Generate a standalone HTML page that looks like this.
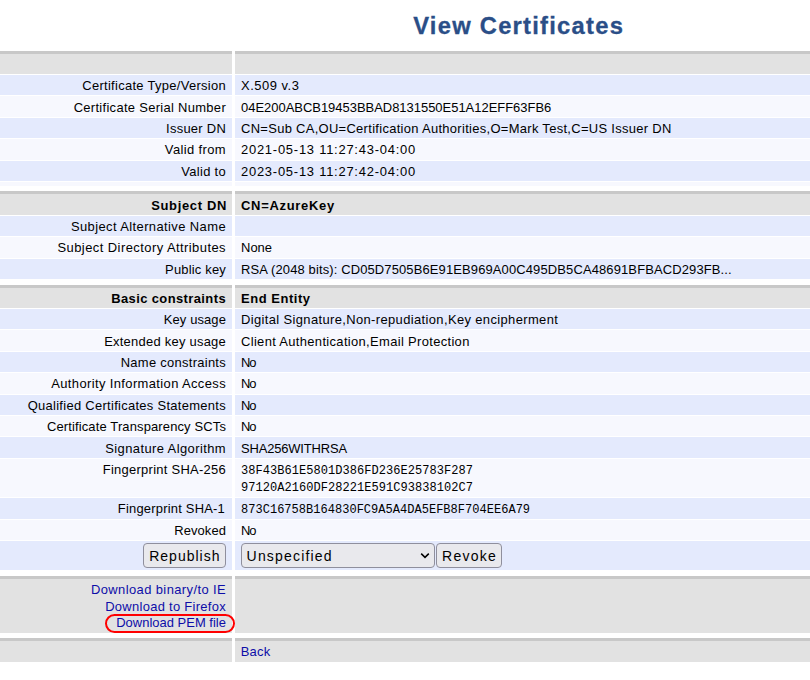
<!DOCTYPE html>
<html><head><meta charset="utf-8"><style>
html,body{margin:0;padding:0;background:#fff;width:810px;height:680px;overflow:hidden;position:relative}
body>div,body>svg{position:absolute}
.t{white-space:pre}
</style></head><body>
<div class="t" style="top:15px;font-family:'Liberation Sans', sans-serif;font-size:23.76px;line-height:22px;color:#2a4e87;-webkit-text-stroke:0.3px #2a4e87;font-weight:bold;letter-spacing:1.250px;left:413.20px;">View Certificates</div>
<div style="left:0px;top:51px;width:232px;height:3px;background:#c8c8c8;"></div>
<div style="left:235px;top:51px;width:575px;height:3px;background:#c8c8c8;"></div>
<div style="left:0px;top:54px;width:232px;height:20px;background:#e2e2e2;"></div>
<div style="left:235px;top:54px;width:575px;height:20px;background:#e2e2e2;"></div>
<div style="left:0px;top:75px;width:232px;height:20px;background:#e4eafd;"></div>
<div style="left:235px;top:75px;width:575px;height:20px;background:#e4eafd;"></div>
<div class="t" style="top:80px;font-family:'Liberation Sans', sans-serif;font-size:12.96px;line-height:12px;color:#000;letter-spacing:0.299px;right:584.00px;">Certificate Type/Version</div>
<div class="t" style="top:80px;font-family:'Liberation Sans', sans-serif;font-size:12.96px;line-height:12px;color:#000;letter-spacing:0.515px;left:241.00px;">X.509 v.3</div>
<div style="left:0px;top:96px;width:232px;height:21px;background:#f7f8fe;"></div>
<div style="left:235px;top:96px;width:575px;height:21px;background:#f7f8fe;"></div>
<div class="t" style="top:102px;font-family:'Liberation Sans', sans-serif;font-size:12.96px;line-height:12px;color:#000;letter-spacing:0.306px;right:584.00px;">Certificate Serial Number</div>
<div class="t" style="top:102px;font-family:'Liberation Sans', sans-serif;font-size:12.96px;line-height:12px;color:#000;letter-spacing:-0.003px;left:241.00px;">04E200ABCB19453BBAD8131550E51A12EFF63FB6</div>
<div style="left:0px;top:118px;width:232px;height:20px;background:#e4eafd;"></div>
<div style="left:235px;top:118px;width:575px;height:20px;background:#e4eafd;"></div>
<div class="t" style="top:123px;font-family:'Liberation Sans', sans-serif;font-size:12.96px;line-height:12px;color:#000;letter-spacing:0.263px;right:584.00px;">Issuer DN</div>
<div class="t" style="top:123px;font-family:'Liberation Sans', sans-serif;font-size:12.96px;line-height:12px;color:#000;letter-spacing:0.304px;left:241.00px;">CN=Sub CA,OU=Certification Authorities,O=Mark Test,C=US Issuer DN</div>
<div style="left:0px;top:139px;width:232px;height:21px;background:#f7f8fe;"></div>
<div style="left:235px;top:139px;width:575px;height:21px;background:#f7f8fe;"></div>
<div class="t" style="top:144px;font-family:'Liberation Sans', sans-serif;font-size:12.96px;line-height:12px;color:#000;letter-spacing:0.380px;right:584.00px;">Valid from</div>
<div class="t" style="top:144px;font-family:'Liberation Sans', sans-serif;font-size:12.96px;line-height:12px;color:#000;letter-spacing:0.754px;left:241.00px;">2021-05-13 11:27:43-04:00</div>
<div style="left:0px;top:161px;width:232px;height:20px;background:#e4eafd;"></div>
<div style="left:235px;top:161px;width:575px;height:20px;background:#e4eafd;"></div>
<div class="t" style="top:166px;font-family:'Liberation Sans', sans-serif;font-size:12.96px;line-height:12px;color:#000;letter-spacing:0.314px;right:584.00px;">Valid to</div>
<div class="t" style="top:166px;font-family:'Liberation Sans', sans-serif;font-size:12.96px;line-height:12px;color:#000;letter-spacing:0.754px;left:241.00px;">2023-05-13 11:27:42-04:00</div>
<div style="left:0px;top:182px;width:232px;height:4px;background:#f7f8fe;"></div>
<div style="left:235px;top:182px;width:575px;height:4px;background:#f7f8fe;"></div>
<div style="left:0px;top:191px;width:232px;height:3px;background:#c8c8c8;"></div>
<div style="left:235px;top:191px;width:575px;height:3px;background:#c8c8c8;"></div>
<div style="left:0px;top:194px;width:232px;height:21px;background:#e2e2e2;"></div>
<div style="left:235px;top:194px;width:575px;height:21px;background:#e2e2e2;"></div>
<div class="t" style="top:200px;font-family:'Liberation Sans', sans-serif;font-size:12.96px;line-height:12px;color:#000;font-weight:bold;letter-spacing:0.667px;right:583.00px;">Subject DN</div>
<div class="t" style="top:200px;font-family:'Liberation Sans', sans-serif;font-size:12.96px;line-height:12px;color:#000;font-weight:bold;letter-spacing:0.722px;left:241.00px;">CN=AzureKey</div>
<div style="left:0px;top:216px;width:232px;height:20px;background:#e4eafd;"></div>
<div style="left:235px;top:216px;width:575px;height:20px;background:#e4eafd;"></div>
<div class="t" style="top:221px;font-family:'Liberation Sans', sans-serif;font-size:12.96px;line-height:12px;color:#000;letter-spacing:0.401px;right:584.00px;">Subject Alternative Name</div>
<div style="left:0px;top:237px;width:232px;height:21px;background:#f7f8fe;"></div>
<div style="left:235px;top:237px;width:575px;height:21px;background:#f7f8fe;"></div>
<div class="t" style="top:242px;font-family:'Liberation Sans', sans-serif;font-size:12.96px;line-height:12px;color:#000;letter-spacing:0.440px;right:584.00px;">Subject Directory Attributes</div>
<div class="t" style="top:242px;font-family:'Liberation Sans', sans-serif;font-size:12.96px;line-height:12px;color:#000;letter-spacing:0.033px;left:241.00px;">None</div>
<div style="left:0px;top:259px;width:232px;height:20px;background:#e4eafd;"></div>
<div style="left:235px;top:259px;width:575px;height:20px;background:#e4eafd;"></div>
<div class="t" style="top:264px;font-family:'Liberation Sans', sans-serif;font-size:12.96px;line-height:12px;color:#000;letter-spacing:0.187px;right:584.00px;">Public key</div>
<div class="t" style="top:264px;font-family:'Liberation Sans', sans-serif;font-size:12.96px;line-height:12px;color:#000;letter-spacing:0.135px;left:241.00px;">RSA (2048 bits): CD05D7505B6E91EB969A00C495DB5CA48691BFBACD293FB...</div>
<div style="left:0px;top:285px;width:232px;height:3px;background:#c8c8c8;"></div>
<div style="left:235px;top:285px;width:575px;height:3px;background:#c8c8c8;"></div>
<div style="left:0px;top:288px;width:232px;height:20px;background:#e2e2e2;"></div>
<div style="left:235px;top:288px;width:575px;height:20px;background:#e2e2e2;"></div>
<div class="t" style="top:293px;font-family:'Liberation Sans', sans-serif;font-size:12.96px;line-height:12px;color:#000;font-weight:bold;letter-spacing:0.402px;right:584.00px;">Basic constraints</div>
<div class="t" style="top:293px;font-family:'Liberation Sans', sans-serif;font-size:12.96px;line-height:12px;color:#000;font-weight:bold;letter-spacing:0.556px;left:241.00px;">End Entity</div>
<div style="left:0px;top:309px;width:232px;height:20px;background:#e4eafd;"></div>
<div style="left:235px;top:309px;width:575px;height:20px;background:#e4eafd;"></div>
<div class="t" style="top:314px;font-family:'Liberation Sans', sans-serif;font-size:12.96px;line-height:12px;color:#000;letter-spacing:0.113px;right:584.00px;">Key usage</div>
<div class="t" style="top:314px;font-family:'Liberation Sans', sans-serif;font-size:12.96px;line-height:12px;color:#000;letter-spacing:0.367px;left:241.00px;">Digital Signature,Non-repudiation,Key encipherment</div>
<div style="left:0px;top:330px;width:232px;height:21px;background:#f7f8fe;"></div>
<div style="left:235px;top:330px;width:575px;height:21px;background:#f7f8fe;"></div>
<div class="t" style="top:336px;font-family:'Liberation Sans', sans-serif;font-size:12.96px;line-height:12px;color:#000;letter-spacing:0.248px;right:584.00px;">Extended key usage</div>
<div class="t" style="top:336px;font-family:'Liberation Sans', sans-serif;font-size:12.96px;line-height:12px;color:#000;letter-spacing:0.334px;left:241.00px;">Client Authentication,Email Protection</div>
<div style="left:0px;top:352px;width:232px;height:20px;background:#e4eafd;"></div>
<div style="left:235px;top:352px;width:575px;height:20px;background:#e4eafd;"></div>
<div class="t" style="top:357px;font-family:'Liberation Sans', sans-serif;font-size:12.96px;line-height:12px;color:#000;letter-spacing:0.280px;right:584.00px;">Name constraints</div>
<div class="t" style="top:357px;font-family:'Liberation Sans', sans-serif;font-size:12.96px;line-height:12px;color:#000;letter-spacing:-1.000px;left:241.00px;">No</div>
<div style="left:0px;top:373px;width:232px;height:21px;background:#f7f8fe;"></div>
<div style="left:235px;top:373px;width:575px;height:21px;background:#f7f8fe;"></div>
<div class="t" style="top:378px;font-family:'Liberation Sans', sans-serif;font-size:12.96px;line-height:12px;color:#000;letter-spacing:0.378px;right:584.00px;">Authority Information Access</div>
<div class="t" style="top:378px;font-family:'Liberation Sans', sans-serif;font-size:12.96px;line-height:12px;color:#000;letter-spacing:-1.000px;left:241.00px;">No</div>
<div style="left:0px;top:395px;width:232px;height:20px;background:#e4eafd;"></div>
<div style="left:235px;top:395px;width:575px;height:20px;background:#e4eafd;"></div>
<div class="t" style="top:400px;font-family:'Liberation Sans', sans-serif;font-size:12.96px;line-height:12px;color:#000;letter-spacing:0.295px;right:584.00px;">Qualified Certificates Statements</div>
<div class="t" style="top:400px;font-family:'Liberation Sans', sans-serif;font-size:12.96px;line-height:12px;color:#000;letter-spacing:-1.000px;left:241.00px;">No</div>
<div style="left:0px;top:416px;width:232px;height:20px;background:#f7f8fe;"></div>
<div style="left:235px;top:416px;width:575px;height:20px;background:#f7f8fe;"></div>
<div class="t" style="top:421px;font-family:'Liberation Sans', sans-serif;font-size:12.96px;line-height:12px;color:#000;letter-spacing:0.143px;right:584.00px;">Certificate Transparency SCTs</div>
<div class="t" style="top:421px;font-family:'Liberation Sans', sans-serif;font-size:12.96px;line-height:12px;color:#000;letter-spacing:-1.000px;left:241.00px;">No</div>
<div style="left:0px;top:437px;width:232px;height:21px;background:#e4eafd;"></div>
<div style="left:235px;top:437px;width:575px;height:21px;background:#e4eafd;"></div>
<div class="t" style="top:443px;font-family:'Liberation Sans', sans-serif;font-size:12.96px;line-height:12px;color:#000;letter-spacing:0.407px;right:584.00px;">Signature Algorithm</div>
<div class="t" style="top:443px;font-family:'Liberation Sans', sans-serif;font-size:12.96px;line-height:12px;color:#000;letter-spacing:-0.158px;left:241.00px;">SHA256WITHRSA</div>
<div style="left:0px;top:459px;width:232px;height:38px;background:#f7f8fe;"></div>
<div style="left:235px;top:459px;width:575px;height:38px;background:#f7f8fe;"></div>
<div class="t" style="top:464px;font-family:'Liberation Sans', sans-serif;font-size:12.96px;line-height:12px;color:#000;letter-spacing:0.271px;right:584.00px;">Fingerprint SHA-256</div>
<div class="t" style="top:465px;font-family:'Liberation Mono', monospace;font-size:12.00px;line-height:12px;color:#000;letter-spacing:0.046px;left:241.00px;">38F43B61E5801D386FD236E25783F287</div>
<div class="t" style="top:482px;font-family:'Liberation Mono', monospace;font-size:12.00px;line-height:12px;color:#000;letter-spacing:0.046px;left:241.00px;">97120A2160DF28221E591C93838102C7</div>
<div style="left:0px;top:498px;width:232px;height:21px;background:#e4eafd;"></div>
<div style="left:235px;top:498px;width:575px;height:21px;background:#e4eafd;"></div>
<div class="t" style="top:503px;font-family:'Liberation Sans', sans-serif;font-size:12.96px;line-height:12px;color:#000;letter-spacing:0.207px;right:585.00px;">Fingerprint SHA-1</div>
<div class="t" style="top:504px;font-family:'Liberation Mono', monospace;font-size:12.00px;line-height:12px;color:#000;letter-spacing:0.026px;left:241.00px;">873C16758B164830FC9A5A4DA5EFB8F704EE6A79</div>
<div style="left:0px;top:520px;width:232px;height:20px;background:#f7f8fe;"></div>
<div style="left:235px;top:520px;width:575px;height:20px;background:#f7f8fe;"></div>
<div class="t" style="top:525px;font-family:'Liberation Sans', sans-serif;font-size:12.96px;line-height:12px;color:#000;letter-spacing:0.077px;right:584.00px;">Revoked</div>
<div class="t" style="top:525px;font-family:'Liberation Sans', sans-serif;font-size:12.96px;line-height:12px;color:#000;letter-spacing:-1.000px;left:241.00px;">No</div>
<div style="left:0px;top:541px;width:232px;height:29px;background:#e4eafd;"></div>
<div style="left:235px;top:541px;width:575px;height:29px;background:#e4eafd;"></div>
<div style="left:143px;top:543px;width:83px;height:25px;background:#e9e9ed;box-sizing:border-box;border:1px solid #8f8f9d;border-radius:4px;"></div>
<div class="t" style="top:549px;font-family:'Liberation Sans', sans-serif;font-size:14.00px;line-height:15px;color:#000;letter-spacing:1.012px;left:149.20px;">Republish</div>
<div style="left:241px;top:543px;width:194px;height:25px;background:#e9e9ed;box-sizing:border-box;border:1px solid #8f8f9d;border-radius:4px;"></div>
<div class="t" style="top:549px;font-family:'Liberation Sans', sans-serif;font-size:14.00px;line-height:15px;color:#000;letter-spacing:1.180px;left:246.60px;">Unspecified</div>
<svg style="position:absolute;left:420px;top:552px" width="11" height="8" viewBox="0 0 11 8"><path d="M1.2 1.6 L5 5.4 L8.8 1.6" fill="none" stroke="#000" stroke-width="1.5"/></svg>
<div style="left:436px;top:543px;width:66px;height:25px;background:#e9e9ed;box-sizing:border-box;border:1px solid #8f8f9d;border-radius:4px;"></div>
<div class="t" style="top:549px;font-family:'Liberation Sans', sans-serif;font-size:14.00px;line-height:15px;color:#000;letter-spacing:1.252px;left:442.10px;">Revoke</div>
<div style="left:0px;top:576px;width:232px;height:3px;background:#c8c8c8;"></div>
<div style="left:235px;top:576px;width:575px;height:3px;background:#c8c8c8;"></div>
<div style="left:0px;top:579px;width:232px;height:54px;background:#e2e2e2;"></div>
<div style="left:235px;top:579px;width:575px;height:54px;background:#e2e2e2;"></div>
<div class="t" style="top:584px;font-family:'Liberation Sans', sans-serif;font-size:12.96px;line-height:12px;color:#0d0da8;letter-spacing:0.393px;right:584.00px;">Download binary/to IE</div>
<div class="t" style="top:601px;font-family:'Liberation Sans', sans-serif;font-size:12.96px;line-height:12px;color:#0d0da8;letter-spacing:0.297px;right:584.00px;">Download to Firefox</div>
<div class="t" style="top:617px;font-family:'Liberation Sans', sans-serif;font-size:12.96px;line-height:12px;color:#0d0da8;letter-spacing:0.020px;right:584.00px;">Download PEM file</div>
<div style="left:105px;top:614px;width:130px;height:19px;box-sizing:border-box;border:2px solid #f00;border-radius:10px;"></div>
<div style="left:0px;top:638px;width:232px;height:3px;background:#c8c8c8;"></div>
<div style="left:235px;top:638px;width:575px;height:3px;background:#c8c8c8;"></div>
<div style="left:0px;top:641px;width:232px;height:21px;background:#e2e2e2;"></div>
<div style="left:235px;top:641px;width:575px;height:21px;background:#e2e2e2;"></div>
<div class="t" style="top:646px;font-family:'Liberation Sans', sans-serif;font-size:12.96px;line-height:12px;color:#0d0da8;letter-spacing:0.227px;left:240.71px;">Back</div>
</body></html>
